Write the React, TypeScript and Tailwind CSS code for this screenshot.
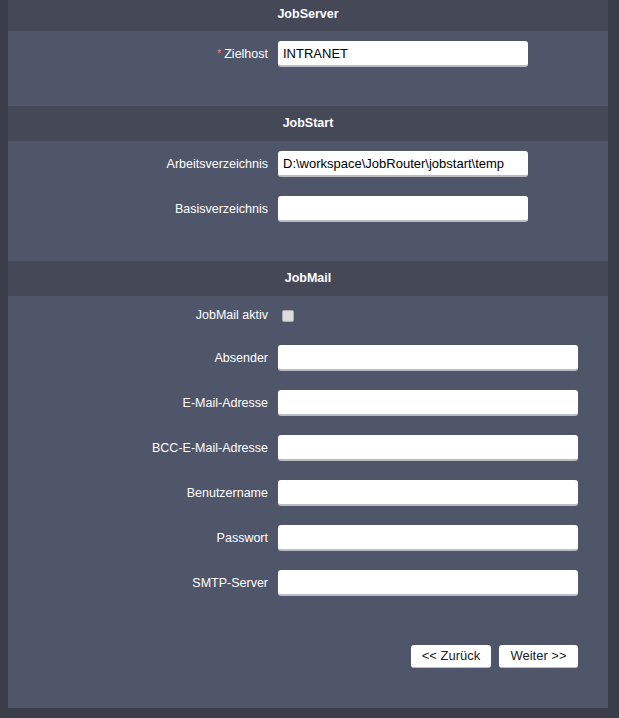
import React from "react";

const font = { fontFamily: '"Liberation Sans", Arial, sans-serif' };

function SectionHeader({ title, first }: { title: string; first?: boolean }) {
  return (
    <div
      className={`flex items-center justify-center bg-[#454857] text-[12.5px] font-bold text-white ${
        first ? "h-[31px] pb-[3px]" : "h-[35px]"
      }`}
    >
      {title}
    </div>
  );
}

function Row({
  label,
  required,
  children,
}: {
  label: string;
  required?: boolean;
  children: React.ReactNode;
}) {
  return (
    <div className="flex items-center">
      <div className="w-[270px] pr-[10px] text-right text-[12.5px] text-white">
        {required && <span className="mr-[3px] text-[11px] text-[#e58a8a] relative -top-[1px]">*</span>}
        {label}
      </div>
      {children}
    </div>
  );
}

function TextInput({ value = "", wide }: { value?: string; wide?: boolean }) {
  return (
    <input
      readOnly
      value={value}
      className={`h-[26px] rounded-[3px] border-b-2 border-[#b9bcc4] bg-white px-[5px] text-[13px] text-black outline-none ${
        wide ? "w-[300px]" : "w-[250px]"
      }`}
      style={font}
    />
  );
}

const mailFields = [
  "Absender",
  "E-Mail-Adresse",
  "BCC-E-Mail-Adresse",
  "Benutzername",
  "Passwort",
  "SMTP-Server",
];

export default function App() {
  return (
    <div className="h-[718px] w-[619px] bg-[#3b3d4b] pl-[8px]" style={font}>
      <div className="w-[600px] bg-[#50566a]">
        <SectionHeader title="JobServer" first />
        <div className="flex flex-col pt-[10px] pb-[39px]">
          <Row label="Zielhost" required>
            <TextInput value="INTRANET" />
          </Row>
        </div>

        <SectionHeader title="JobStart" />
        <div className="flex flex-col gap-[19px] pt-[10px] pb-[39px]">
          <Row label="Arbeitsverzeichnis">
            <TextInput value="D:\workspace\JobRouter\jobstart\temp" />
          </Row>
          <Row label="Basisverzeichnis">
            <TextInput />
          </Row>
        </div>

        <SectionHeader title="JobMail" />
        <div className="flex flex-col pt-[9px] pb-[40px]">
          <div className="flex h-[21px] items-center">
            <div className="w-[270px] pr-[10px] text-right text-[12.5px] text-white">JobMail aktiv</div>
            <span className="ml-[4px] block h-[12px] w-[12px] rounded-[2px] border border-[#a9abb1] bg-[#dcdcdc]" />
          </div>
          <div className="mt-[19px] flex flex-col gap-[19px]">
            {mailFields.map((f) => (
              <Row key={f} label={f}>
                <TextInput wide />
              </Row>
            ))}
          </div>
          <div className="mt-[49px] flex justify-end gap-[8px] pr-[30px]">
            <button className="h-[23px] w-[80px] rounded-[3px] border-b border-[#b9bcc4] bg-white text-[13px] text-[#222]">
              &lt;&lt; Zurück
            </button>
            <button className="h-[23px] w-[79px] rounded-[3px] border-b border-[#b9bcc4] bg-white text-[13px] text-[#222]">
              Weiter &gt;&gt;
            </button>
          </div>
        </div>
      </div>
    </div>
  );
}
